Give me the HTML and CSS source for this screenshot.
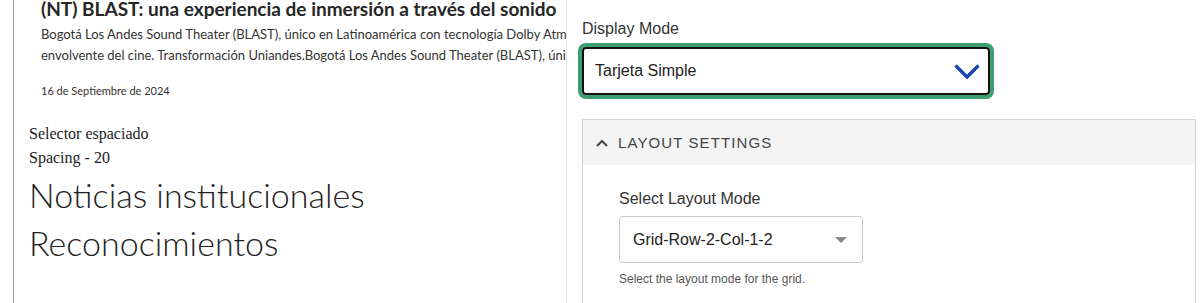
FILE: index.html
```html
<!DOCTYPE html>
<html lang="es">
<head>
    <meta charset="UTF-8">
    <meta name="viewport" content="width=device-width, initial-scale=1.0">
    <title>Editor de noticias</title>
    <link rel="stylesheet" href="styles.css">
</head>
<body>
    <div class="page">
        <div class="preview">
            <div class="article">
                <h3 class="article-title">(NT) BLAST: una experiencia de inmersión a través del sonido</h3>
                <p class="article-desc">Bogotá Los Andes Sound Theater (BLAST), único en Latinoamérica con tecnología Dolby Atmos, ofrece una experiencia<br>envolvente del cine. Transformación Uniandes.Bogotá Los Andes Sound Theater (BLAST), único en Latinoamérica.</p>
                <p class="article-date">16 de Septiembre de 2024</p>
            </div>

            <div class="spacing">
                <p class="spacing-line">Selector espaciado</p>
                <p class="spacing-line">Spacing - 20</p>
                <h2 class="big-title">Noticias institucionales</h2>
                <h2 class="big-title">Reconocimientos</h2>
            </div>
        </div>

        <div class="settings">
            <div class="field-label">Display Mode</div>
            <div class="display-select">
                <span>Tarjeta Simple</span>
                <svg class="chevron-down" width="28" height="17" viewBox="0 0 28 17">
                    <path d="M2.5 2.5 L14 14 L25.5 2.5" fill="none" stroke="#1a46b4" stroke-width="3.4"/>
                </svg>
            </div>

            <div class="panel">
                <div class="panel-header">
                    <svg class="chevron-up" width="12" height="8" viewBox="0 0 12 8">
                        <path d="M1 7 L6 2 L11 7" fill="none" stroke="#444" stroke-width="2"/>
                    </svg>
                    <span>Layout Settings</span>
                </div>
                <div class="panel-body">
                    <div class="panel-label">Select Layout Mode</div>
                    <div class="layout-select">
                        <span>Grid-Row-2-Col-1-2</span>
                        <span class="caret"></span>
                    </div>
                    <p class="help">Select the layout mode for the grid.</p>
                </div>
            </div>
        </div>
    </div>
</body>
</html>
```

FILE: styles.css
```css
body {
    margin: 0;
    background: #fff;
    overflow: hidden;
}
.page {
    display: flex;
    height: 303px;
}
.preview {
    width: 552px;
    flex: none;
    margin-left: 13px;
    border-left: 1px solid #9494dc;
    overflow: hidden;
    color: #222;
}
.article {
    margin-top: -2px;
    padding-left: 27px;
    font-family: Lato, "Open Sans", sans-serif;
    white-space: nowrap;
}
.article-title {
    margin: 0;
    font-size: 19px;
    line-height: 22px;
    font-weight: 700;
    color: #262626;
}
.article-desc {
    margin: 4px 0 0;
    font-size: 13px;
    line-height: 21px;
    color: #333;
}
.article-date {
    margin: 18px 0 0;
    font-size: 11px;
    line-height: 14px;
    color: #333;
}
.spacing {
    margin-top: 24px;
    padding-left: 15px;
}
.spacing-line {
    margin: 0;
    font-family: "Liberation Serif", serif;
    font-size: 16px;
    line-height: 24px;
    color: #222;
}
.big-title {
    margin: 0;
    font-family: Lato, sans-serif;
    font-weight: 300;
    font-size: 34px;
    line-height: 48px;
    color: #222;
}
.big-title:first-of-type {
    margin-top: 1px;
}
.settings {
    flex: 1;
    border-left: 1px solid #e6e6e6;
    padding: 20px 4px 0 15px;
    font-family: Arial, "Liberation Sans", sans-serif;
    color: #333;
}
.field-label {
    font-size: 16px;
    line-height: 18px;
    color: #333;
}
.display-select {
    display: flex;
    align-items: center;
    justify-content: space-between;
    width: 408px;
    height: 48px;
    margin-top: 9px;
    box-sizing: border-box;
    padding: 0 7px 0 11px;
    border: 2px solid #111;
    border-radius: 4px;
    box-shadow: 0 0 0 4px #3d9e71;
    font-size: 16px;
    color: #222;
}
.chevron-down {
    display: block;
}
.panel {
    margin-top: 24px;
    border: 1px solid #d2d2d2;
    border-bottom: none;
    height: 200px;
}
.panel-header {
    display: flex;
    align-items: center;
    height: 45px;
    padding-left: 13px;
    background: #f4f4f4;
    font-size: 15px;
    letter-spacing: 1.1px;
    text-transform: uppercase;
    color: #444;
}
.chevron-up {
    margin-right: 10px;
}
.panel-body {
    padding: 25px 36px;
}
.panel-label {
    font-size: 16px;
    line-height: 18px;
    color: #333;
}
.layout-select {
    display: flex;
    align-items: center;
    justify-content: space-between;
    width: 244px;
    height: 47px;
    margin-top: 8px;
    box-sizing: border-box;
    padding: 0 15px 0 13px;
    border: 1px solid #ccc;
    border-radius: 3px;
    font-size: 16px;
    color: #222;
}
.caret {
    width: 0;
    height: 0;
    border-left: 6px solid transparent;
    border-right: 6px solid transparent;
    border-top: 6px solid #888;
}
.help {
    margin: 9px 0 0;
    font-size: 12px;
    color: #555;
}
```
